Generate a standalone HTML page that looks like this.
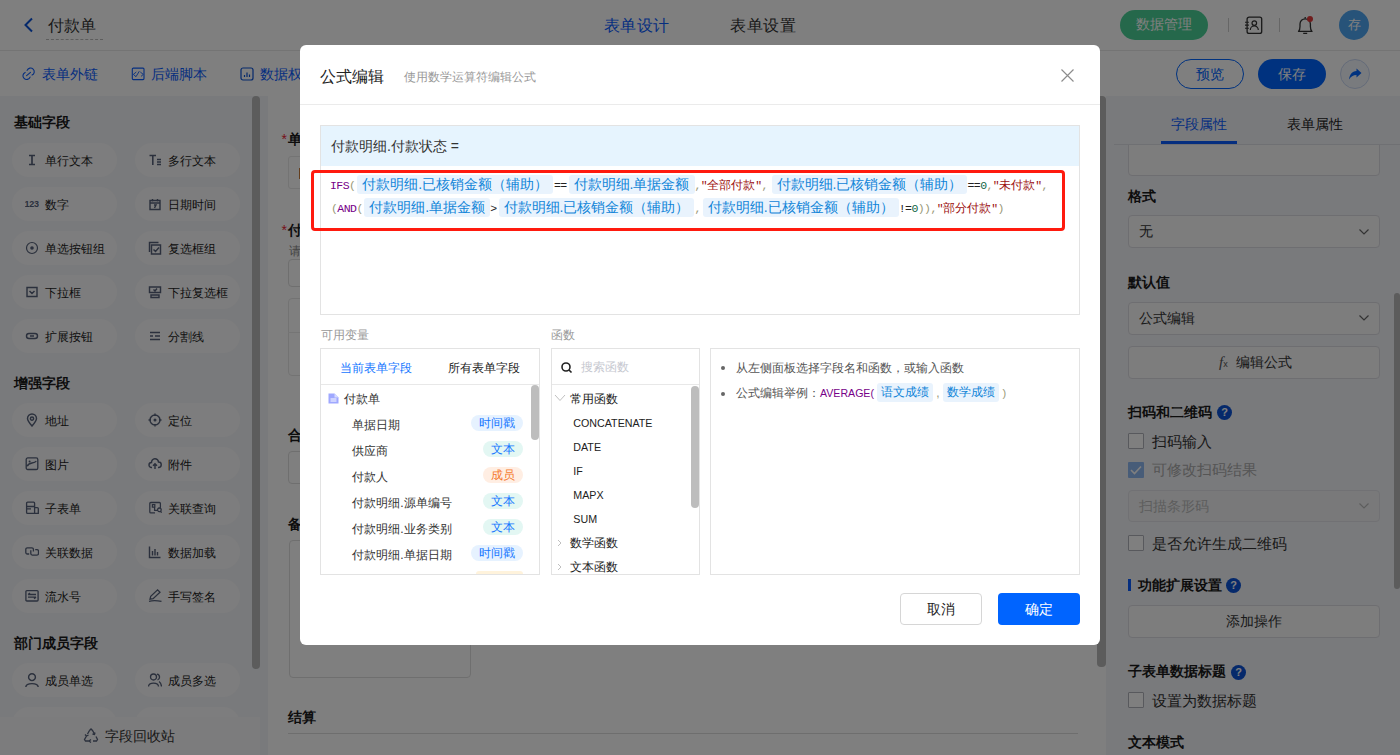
<!DOCTYPE html>
<html><head><meta charset="utf-8"><style>
*{box-sizing:border-box;margin:0;padding:0}
html,body{width:1400px;height:755px;overflow:hidden;background:#fff;font-family:"Liberation Sans",sans-serif;color:#222}
.a{position:absolute}
.nw{white-space:nowrap}
.chip{display:inline-block;height:19.5px;line-height:19.5px;background:#e9f3fd;color:#0f84d8;border-radius:3px;padding:0 5px;font-size:14px;vertical-align:top;margin-top:0.5px}
.chip2{display:inline-block;height:19px;line-height:19px;background:#e9f3fd;color:#0f84d8;border-radius:3px;padding:0 4px;font-size:12px;vertical-align:top;margin-top:0.5px}
.mono{font-family:"Liberation Mono",monospace;font-size:11.5px;letter-spacing:-0.55px}
</style></head><body>
<div class="a" style="left:0px;top:0px;width:1400px;height:50px;background:#fff"></div>
<div class="a" style="left:0px;top:50px;width:1400px;height:1px;background:#e8e8e8"></div>
<svg class="a" style="left:22px;top:17px" width="12" height="16" viewBox="0 0 12 16"><path d="M10 1.5 L3.5 8 L10 14.5" fill="none" stroke="#0a52d6" stroke-width="2"/></svg>
<div class="a nw" style="left:48px;top:14.5px;font-size:16px;line-height:22px;color:#333;font-weight:normal;">付款单</div>
<div class="a" style="left:46px;top:39px;width:57px;height:1px;border-top:1px dashed #bbb"></div>
<div class="a nw" style="left:603.5px;top:14.8px;font-size:16px;line-height:22px;color:#0a5cff;font-weight:normal;letter-spacing:0.6px">表单设计</div>
<div class="a nw" style="left:730px;top:14.8px;font-size:16px;line-height:22px;color:#333;font-weight:normal;letter-spacing:0.6px">表单设置</div>
<div class="a nw" style="left:1120px;top:10px;width:88px;height:30px;border-radius:15px;background:#4ad197;color:#fff;font-size:14px;line-height:29px;text-align:center">数据管理</div>
<div class="a" style="left:1228px;top:18px;width:1px;height:14px;background:#ccc"></div>
<div class="a" style="left:1279px;top:18px;width:1px;height:14px;background:#ccc"></div>
<svg class="a" style="left:1244px;top:16px" width="20" height="19" viewBox="0 0 20 19"><rect x="3.1" y="1.1" width="14.6" height="16.3" rx="2" fill="none" stroke="#333" stroke-width="1.3"/><circle cx="10.3" cy="7.1" r="2.3" fill="none" stroke="#333" stroke-width="1.2"/><path d="M6.3 13.9 A4 4 0 0 1 14.3 13.9" fill="none" stroke="#333" stroke-width="1.2"/><path d="M1 6.3H4.9M1 9.1H4.9M1 12.3H4.9" stroke="#333" stroke-width="1.1"/></svg>
<svg class="a" style="left:1296px;top:15px" width="20" height="21" viewBox="0 0 20 21"><path d="M2.5 16.4H16C14.6 15.2 14.4 13.5 14.4 11.5V9A5.2 5.2 0 0 0 4 9V11.5C4 13.5 3.8 15.2 2.5 16.4Z" fill="none" stroke="#333" stroke-width="1.3" stroke-linejoin="round"/><path d="M7.2 18.4H11.2M9.2 2V3.6" stroke="#333" stroke-width="1.3"/><circle cx="14" cy="3.9" r="3" fill="#e03a3a"/></svg>
<div class="a nw" style="left:1339px;top:10px;width:30px;height:30px;border-radius:15px;background:#4ea6f2;color:#fff;font-size:13px;line-height:30px;text-align:center">存</div>
<div class="a" style="left:0px;top:51px;width:1400px;height:45px;background:#fff"></div>
<svg class="a" style="left:22px;top:67px" width="14" height="14" viewBox="0 0 14 14"><path d="M5.1 3.4A3.7 3.7 0 1 1 10.05 8.1M8.1 10.1A3.7 3.7 0 1 1 3.15 5.4M4.6 8.6L8.5 5.3" fill="none" stroke="#0a5cff" stroke-width="1.1" stroke-linecap="round"/></svg>
<div class="a nw" style="left:42px;top:63.5px;font-size:14px;line-height:20px;color:#0a5cff;font-weight:normal;">表单外链</div>
<svg class="a" style="left:131px;top:67px" width="14" height="14" viewBox="0 0 14 14"><rect x="1.3" y="1.1" width="11.7" height="11.5" rx="1" fill="none" stroke="#0a5cff" stroke-width="1.1"/><path d="M5.3 5L2.3 7.4L5 9.7L8.3 4.2M9.3 5L12.3 7.4L10 9.4" fill="none" stroke="#0a5cff" stroke-width="0.9"/></svg>
<div class="a nw" style="left:151px;top:63.5px;font-size:14px;line-height:20px;color:#0a5cff;font-weight:normal;">后端脚本</div>
<svg class="a" style="left:240px;top:67px" width="14" height="14" viewBox="0 0 14 14"><rect x="1" y="1" width="12" height="12" rx="2" fill="none" stroke="#0a52d6" stroke-width="1.2"/><path d="M4.5 10 V8 M7 10 V5.5 M9.5 10 V7.5" stroke="#0a52d6" stroke-width="1.2"/></svg>
<div class="a nw" style="left:260px;top:63.5px;font-size:14px;line-height:20px;color:#0a5cff;font-weight:normal;">数据权限</div>
<div class="a nw" style="left:1176px;top:59px;width:68px;height:30px;border:1px solid #0064ff;border-radius:15px;color:#0064ff;font-size:14px;line-height:28px;text-align:center">预览</div>
<div class="a nw" style="left:1258px;top:59px;width:68px;height:30px;border-radius:15px;background:#0064ff;color:#fff;font-size:14px;line-height:30px;text-align:center">保存</div>
<div class="a" style="left:1340px;top:59px;width:30px;height:30px;border:1px solid #c9d7f2;border-radius:15px;background:#f3f6fd"></div>
<svg class="a" style="left:1347px;top:66px" width="16" height="16" viewBox="0 0 16 16"><path d="M9.5 2.5 L14.5 7 L9.5 11.5 V9 C6 9 4 10.5 2 13.5 C2.5 8.5 5 5.5 9.5 5 Z" fill="#0064ff"/></svg>
<div class="a" style="left:0px;top:96px;width:268px;height:659px;background:#f3f4f8"></div>
<div class="a" style="left:252px;top:96px;width:8px;height:573px;background:#b8b8b8;border-radius:4px"></div>
<div class="a nw" style="left:14px;top:112.2px;font-size:14px;line-height:20px;color:#1a1a1a;font-weight:bold;">基础字段</div>
<div class="a" style="left:12px;top:143px;width:105px;height:34px;border-radius:17px;background:#fbfbfc"></div>
<svg class="a" style="left:25px;top:153px" width="14" height="14" viewBox="0 0 14 14"><path d="M4 2.5H10M4 11.5H10M7 2.5V11.5" fill="none" stroke="#56617a" stroke-width="1.68"/></svg>
<div class="a nw" style="left:45px;top:150.5px;font-size:12px;line-height:20px;color:#222;font-weight:normal;">单行文本</div>
<div class="a" style="left:135px;top:143px;width:105px;height:34px;border-radius:17px;background:#fbfbfc"></div>
<svg class="a" style="left:148px;top:153px" width="14" height="14" viewBox="0 0 14 14"><path d="M1.5 2.5H8M4.8 2.5V12M9 6.5H13M9 9H13M9 11.5H13" fill="none" stroke="#56617a" stroke-width="1.56"/></svg>
<div class="a nw" style="left:168px;top:150.5px;font-size:12px;line-height:20px;color:#222;font-weight:normal;">多行文本</div>
<div class="a" style="left:12px;top:187px;width:105px;height:34px;border-radius:17px;background:#fbfbfc"></div>
<svg class="a" style="left:25px;top:197px" width="14" height="14" viewBox="0 0 14 14"><text x="-0.5" y="10" font-size="9" font-weight="bold" fill="#56617a" font-family="Liberation Sans" letter-spacing="-0.2">123</text></svg>
<div class="a nw" style="left:45px;top:194.5px;font-size:12px;line-height:20px;color:#222;font-weight:normal;">数字</div>
<div class="a" style="left:135px;top:187px;width:105px;height:34px;border-radius:17px;background:#fbfbfc"></div>
<svg class="a" style="left:148px;top:197px" width="14" height="14" viewBox="0 0 14 14"><path d="M2 3.5H12V12.5H2ZM2 6H12M4.5 2V4.5M9.5 2V4.5M6 8H8L6.5 11" fill="none" stroke="#56617a" stroke-width="1.44"/></svg>
<div class="a nw" style="left:168px;top:194.5px;font-size:12px;line-height:20px;color:#222;font-weight:normal;">日期时间</div>
<div class="a" style="left:12px;top:231px;width:105px;height:34px;border-radius:17px;background:#fbfbfc"></div>
<svg class="a" style="left:25px;top:241px" width="14" height="14" viewBox="0 0 14 14"><circle cx="7" cy="7" r="5.5" fill="none" stroke="#56617a" stroke-width="1.2"/><circle cx="7" cy="7" r="1.8" fill="#56617a"/></svg>
<div class="a nw" style="left:45px;top:238.5px;font-size:12px;line-height:20px;color:#222;font-weight:normal;">单选按钮组</div>
<div class="a" style="left:135px;top:231px;width:105px;height:34px;border-radius:17px;background:#fbfbfc"></div>
<svg class="a" style="left:148px;top:241px" width="14" height="14" viewBox="0 0 14 14"><path d="M3.5 4H12.5V13H3.5ZM1.5 11V1.5H10.5M5.5 8.5L7.5 10.5L11 6.5" fill="none" stroke="#56617a" stroke-width="1.44"/></svg>
<div class="a nw" style="left:168px;top:238.5px;font-size:12px;line-height:20px;color:#222;font-weight:normal;">复选框组</div>
<div class="a" style="left:12px;top:275px;width:105px;height:34px;border-radius:17px;background:#fbfbfc"></div>
<svg class="a" style="left:25px;top:285px" width="14" height="14" viewBox="0 0 14 14"><path d="M2 2.5H12V11.5H2ZM4.5 6L7 8.5L9.5 6" fill="none" stroke="#56617a" stroke-width="1.44"/></svg>
<div class="a nw" style="left:45px;top:282.5px;font-size:12px;line-height:20px;color:#222;font-weight:normal;">下拉框</div>
<div class="a" style="left:135px;top:275px;width:105px;height:34px;border-radius:17px;background:#fbfbfc"></div>
<svg class="a" style="left:148px;top:285px" width="14" height="14" viewBox="0 0 14 14"><path d="M1.5 2H12.5V7.5H1.5ZM3 10H11V12.5H3ZM5.5 4.5L7 6L9 3.5" fill="none" stroke="#56617a" stroke-width="1.44"/></svg>
<div class="a nw" style="left:168px;top:282.5px;font-size:12px;line-height:20px;color:#222;font-weight:normal;">下拉复选框</div>
<div class="a" style="left:12px;top:319px;width:105px;height:34px;border-radius:17px;background:#fbfbfc"></div>
<svg class="a" style="left:25px;top:329px" width="14" height="14" viewBox="0 0 14 14"><path d="M4 4.5H10A2.5 2.5 0 0 1 10 9.5H4A2.5 2.5 0 0 1 4 4.5ZM5 7H9" fill="none" stroke="#56617a" stroke-width="1.44"/></svg>
<div class="a nw" style="left:45px;top:326.5px;font-size:12px;line-height:20px;color:#222;font-weight:normal;">扩展按钮</div>
<div class="a" style="left:135px;top:319px;width:105px;height:34px;border-radius:17px;background:#fbfbfc"></div>
<svg class="a" style="left:148px;top:329px" width="14" height="14" viewBox="0 0 14 14"><path d="M2 3.5H12M2 7H5M7 7H12M2 10.5H12" fill="none" stroke="#56617a" stroke-width="1.44"/></svg>
<div class="a nw" style="left:168px;top:326.5px;font-size:12px;line-height:20px;color:#222;font-weight:normal;">分割线</div>
<div class="a nw" style="left:14px;top:372.5px;font-size:14px;line-height:20px;color:#1a1a1a;font-weight:bold;">增强字段</div>
<div class="a" style="left:12px;top:403px;width:105px;height:34px;border-radius:17px;background:#fbfbfc"></div>
<svg class="a" style="left:25px;top:413px" width="14" height="14" viewBox="0 0 14 14"><path d="M7 13C3.5 9 2.5 7 2.5 5.5A4.5 4.5 0 0 1 11.5 5.5C11.5 7 10.5 9 7 13ZM7 4A1.6 1.6 0 1 1 7 7.2A1.6 1.6 0 1 1 7 4" fill="none" stroke="#56617a" stroke-width="1.44"/></svg>
<div class="a nw" style="left:45px;top:410.5px;font-size:12px;line-height:20px;color:#222;font-weight:normal;">地址</div>
<div class="a" style="left:135px;top:403px;width:105px;height:34px;border-radius:17px;background:#fbfbfc"></div>
<svg class="a" style="left:148px;top:413px" width="14" height="14" viewBox="0 0 14 14"><path d="M7 2A5 5 0 1 1 7 12A5 5 0 1 1 7 2M7 0.5V3M7 11V13.5M0.5 7H3M11 7H13.5" fill="none" stroke="#56617a" stroke-width="1.44"/><circle cx="7" cy="7" r="1.5" fill="#56617a"/></svg>
<div class="a nw" style="left:168px;top:410.5px;font-size:12px;line-height:20px;color:#222;font-weight:normal;">定位</div>
<div class="a" style="left:12px;top:447px;width:105px;height:34px;border-radius:17px;background:#fbfbfc"></div>
<svg class="a" style="left:25px;top:457px" width="14" height="14" viewBox="0 0 14 14"><path d="M2.8 0.9H11.2A1.6 1.6 0 0 1 12.8 2.5V10.9A1.6 1.6 0 0 1 11.2 12.5H2.8A1.6 1.6 0 0 1 1.2 10.9V2.5A1.6 1.6 0 0 1 2.8 0.9ZM2.3 9.3C3 7 5 6.3 7 6C9 5.7 10.5 5.2 11.3 4.2" fill="none" stroke="#56617a" stroke-width="1.32"/><circle cx="4.6" cy="4.4" r="1" fill="#56617a"/></svg>
<div class="a nw" style="left:45px;top:454.5px;font-size:12px;line-height:20px;color:#222;font-weight:normal;">图片</div>
<div class="a" style="left:135px;top:447px;width:105px;height:34px;border-radius:17px;background:#fbfbfc"></div>
<svg class="a" style="left:148px;top:457px" width="14" height="14" viewBox="0 0 14 14"><path d="M4 10.5H3.5A2.5 2.5 0 0 1 3.5 5.5A3.5 3.5 0 0 1 10.5 5A2.5 2.5 0 0 1 10.5 10.5H10M7 12V7M5 8.8L7 6.8L9 8.8" fill="none" stroke="#56617a" stroke-width="1.44"/></svg>
<div class="a nw" style="left:168px;top:454.5px;font-size:12px;line-height:20px;color:#222;font-weight:normal;">附件</div>
<div class="a" style="left:12px;top:491px;width:105px;height:34px;border-radius:17px;background:#fbfbfc"></div>
<svg class="a" style="left:25px;top:501px" width="14" height="14" viewBox="0 0 14 14"><path d="M2.6 1.2H8.6A1 1 0 0 1 9.6 2.2V12.4H2.6A1 1 0 0 1 1.6 11.4V2.2A1 1 0 0 1 2.6 1.2ZM1.6 5.5H9.6M1.8 7.9H6M9.6 6.6H12.3A1 1 0 0 1 13.3 7.6V12.4H9.6" fill="none" stroke="#56617a" stroke-width="1.32"/></svg>
<div class="a nw" style="left:45px;top:498.5px;font-size:12px;line-height:20px;color:#222;font-weight:normal;">子表单</div>
<div class="a" style="left:135px;top:491px;width:105px;height:34px;border-radius:17px;background:#fbfbfc"></div>
<svg class="a" style="left:148px;top:501px" width="14" height="14" viewBox="0 0 14 14"><path d="M7 11.9H2.8A1 1 0 0 1 1.8 10.9V2.5A1 1 0 0 1 2.8 1.5H11.4A1 1 0 0 1 12.4 2.5V6.5M4.4 3.7H6.8V6.1H4.4ZM6.6 6.3V9.3H9.2M11.4 7A1.8 1.8 0 1 1 11.39 7M12.7 10.1L13.6 11.8" fill="none" stroke="#56617a" stroke-width="1.26"/></svg>
<div class="a nw" style="left:168px;top:498.5px;font-size:12px;line-height:20px;color:#222;font-weight:normal;">关联查询</div>
<div class="a" style="left:12px;top:535px;width:105px;height:34px;border-radius:17px;background:#fbfbfc"></div>
<svg class="a" style="left:25px;top:545px" width="14" height="14" viewBox="0 0 14 14"><path d="M4.2 9H2.3A1.5 1.5 0 0 1 0.8 7.5V4.3A1.5 1.5 0 0 1 2.3 2.8H6.9A1.5 1.5 0 0 1 8.4 4.3V6.6M5.8 5.2V8.6A1.5 1.5 0 0 0 7.3 10.1H12A1.5 1.5 0 0 0 13.5 8.6V6.2A1.5 1.5 0 0 0 12 4.7H10.2" fill="none" stroke="#56617a" stroke-width="1.32"/></svg>
<div class="a nw" style="left:45px;top:542.5px;font-size:12px;line-height:20px;color:#222;font-weight:normal;">关联数据</div>
<div class="a" style="left:135px;top:535px;width:105px;height:34px;border-radius:17px;background:#fbfbfc"></div>
<svg class="a" style="left:148px;top:545px" width="14" height="14" viewBox="0 0 14 14"><path d="M1.5 1.5V12.5H12.5M4.5 10.5V6M7 10.5V4M9.5 10.5V7" fill="none" stroke="#56617a" stroke-width="1.44"/></svg>
<div class="a nw" style="left:168px;top:542.5px;font-size:12px;line-height:20px;color:#222;font-weight:normal;">数据加载</div>
<div class="a" style="left:12px;top:579px;width:105px;height:34px;border-radius:17px;background:#fbfbfc"></div>
<svg class="a" style="left:25px;top:589px" width="14" height="14" viewBox="0 0 14 14"><path d="M1.9 1.6H12.1A1 1 0 0 1 13.1 2.6V11A1 1 0 0 1 12.1 12H1.9A1 1 0 0 1 0.9 11V2.6A1 1 0 0 1 1.9 1.6ZM3 5.5H11M3 5.5L5 4M3 8.1H11M11 8.1L9 9.6" fill="none" stroke="#56617a" stroke-width="1.32"/></svg>
<div class="a nw" style="left:45px;top:586.5px;font-size:12px;line-height:20px;color:#222;font-weight:normal;">流水号</div>
<div class="a" style="left:135px;top:579px;width:105px;height:34px;border-radius:17px;background:#fbfbfc"></div>
<svg class="a" style="left:148px;top:589px" width="14" height="14" viewBox="0 0 14 14"><path d="M2 10.2L2.7 7.4L9.6 0.9L12 3.2L5.1 9.6ZM1 12.4C4 11.5 8 11.3 13.5 12.4" fill="none" stroke="#56617a" stroke-width="1.26"/></svg>
<div class="a nw" style="left:168px;top:586.5px;font-size:12px;line-height:20px;color:#222;font-weight:normal;">手写签名</div>
<div class="a nw" style="left:14px;top:632.5px;font-size:14px;line-height:20px;color:#1a1a1a;font-weight:bold;">部门成员字段</div>
<div class="a" style="left:12px;top:663px;width:105px;height:34px;border-radius:17px;background:#fbfbfc"></div>
<svg class="a" style="left:25px;top:673px" width="14" height="14" viewBox="0 0 14 14"><path d="M7 0.8A3.4 3.4 0 1 1 7 7.6A3.4 3.4 0 1 1 7 0.8M0.8 14C1.2 9.5 12.8 9.5 13.2 14" fill="none" stroke="#56617a" stroke-width="1.44"/></svg>
<div class="a nw" style="left:45px;top:670.5px;font-size:12px;line-height:20px;color:#222;font-weight:normal;">成员单选</div>
<div class="a" style="left:135px;top:663px;width:105px;height:34px;border-radius:17px;background:#fbfbfc"></div>
<svg class="a" style="left:148px;top:673px" width="14" height="14" viewBox="0 0 14 14"><path d="M5.5 1A3 3 0 1 1 5.5 7A3 3 0 1 1 5.5 1M0.5 13.5C0.8 9 10.2 9 10.5 13.5M9 1.2A3 3 0 0 1 9.5 7M11 8.5C12.8 9.5 13.3 11.5 13.5 13.5" fill="none" stroke="#56617a" stroke-width="1.32"/></svg>
<div class="a nw" style="left:168px;top:670.5px;font-size:12px;line-height:20px;color:#222;font-weight:normal;">成员多选</div>
<div class="a" style="left:12px;top:707px;width:105px;height:34px;border-radius:17px;background:#fbfbfc"></div>
<svg class="a" style="left:25px;top:717px" width="14" height="14" viewBox="0 0 14 14"><path d="M2 2H12V12H2Z" fill="none" stroke="#56617a" stroke-width="1.44"/></svg>
<div class="a nw" style="left:45px;top:714.5px;font-size:12px;line-height:20px;color:#222;font-weight:normal;">部门单选</div>
<div class="a" style="left:135px;top:707px;width:105px;height:34px;border-radius:17px;background:#fbfbfc"></div>
<svg class="a" style="left:148px;top:717px" width="14" height="14" viewBox="0 0 14 14"><path d="M2 2H12V12H2Z" fill="none" stroke="#56617a" stroke-width="1.44"/></svg>
<div class="a nw" style="left:168px;top:714.5px;font-size:12px;line-height:20px;color:#222;font-weight:normal;">部门多选</div>
<div class="a" style="left:0px;top:716.5px;width:260px;height:39px;background:#f9f9fa"></div>
<svg class="a" style="left:83px;top:728px" width="16" height="15" viewBox="0 0 16 15"><path d="M6.5 2.5L8 1L9.5 2.5L11.5 6M13 8.5L14.5 11.5L13.5 13H10M6 13H2.5L1.5 11.5L3.5 8M4.5 6L6.5 2.5M12 4.5L11.5 6.5L9.5 6M8 14.5L6 13L8 11.5M2 6.5L3.5 8L5.5 7" fill="none" stroke="#56617a" stroke-width="1.32"/></svg>
<div class="a nw" style="left:105px;top:725.8px;font-size:14px;line-height:20px;color:#333;font-weight:normal;">字段回收站</div>
<div class="a" style="left:268px;top:96px;width:838px;height:659px;background:#fff"></div>
<div class="a" style="left:1097px;top:96px;width:9px;height:571px;background:#b8b8b8;border-radius:4px"></div>
<div class="a nw" style="left:281.5px;top:129.0px;font-size:14px;line-height:20px;color:#e23;font-weight:normal;">*</div>
<div class="a nw" style="left:288px;top:129.0px;font-size:14px;line-height:20px;color:#1a1a1a;font-weight:bold;">单据日期</div>
<div class="a" style="left:288px;top:156px;width:400px;height:33px;border:1px solid #e8e8e8;border-radius:3px"></div>
<div class="a" style="left:299px;top:168px;width:1px;height:11px;background:#c97c3a"></div>
<div class="a nw" style="left:281.5px;top:219.5px;font-size:14px;line-height:20px;color:#e23;font-weight:normal;">*</div>
<div class="a nw" style="left:288px;top:219.5px;font-size:14px;line-height:20px;color:#1a1a1a;font-weight:bold;">付款明细</div>
<div class="a nw" style="left:288.5px;top:241.0px;font-size:12px;line-height:20px;color:#888;font-weight:normal;">请填写明细</div>
<div class="a" style="left:288px;top:259px;width:400px;height:28px;border:1px solid #dedede;border-radius:4px"></div>
<div class="a" style="left:288px;top:298px;width:800px;height:78px;border:1px solid #e6e6e6;border-radius:4px"></div>
<div class="a" style="left:288px;top:332px;width:800px;height:1px;background:#eaeaea"></div>
<div class="a nw" style="left:288px;top:425.0px;font-size:14px;line-height:20px;color:#1a1a1a;font-weight:bold;">合计金额</div>
<div class="a" style="left:288px;top:451px;width:400px;height:33px;border:1px solid #dedede;border-radius:4px"></div>
<div class="a nw" style="left:288px;top:513.5px;font-size:14px;line-height:20px;color:#1a1a1a;font-weight:bold;">备注</div>
<div class="a" style="left:289px;top:540px;width:182px;height:138px;border:1px solid #dedede;border-radius:4px"></div>
<div class="a nw" style="left:288px;top:706.5px;font-size:14px;line-height:20px;color:#1a1a1a;font-weight:bold;">结算</div>
<div class="a" style="left:288px;top:733px;width:790px;height:1px;background:#dcdcdc"></div>
<div class="a" style="left:1106px;top:96px;width:294px;height:659px;background:#f3f4f8"></div>
<div class="a" style="left:1394px;top:293px;width:6px;height:296px;background:#b8b8b8;border-radius:3px"></div>
<div class="a" style="left:1128px;top:130px;width:252px;height:46px;background:#fafafb;border:1px solid #dcdde3;border-radius:4px"></div>
<div class="a" style="left:1106px;top:96px;width:288px;height:48px;background:#f3f4f8"></div>
<div class="a" style="left:1114px;top:144px;width:286px;height:1px;background:#dfe1e6"></div>
<div class="a nw" style="left:1171px;top:113.5px;font-size:14px;line-height:20px;color:#0a5cff;font-weight:normal;">字段属性</div>
<div class="a nw" style="left:1287px;top:113.5px;font-size:14px;line-height:20px;color:#222;font-weight:normal;">表单属性</div>
<div class="a" style="left:1161px;top:141px;width:76px;height:3px;background:#0a5cff"></div>
<div class="a nw" style="left:1128px;top:185.5px;font-size:14px;line-height:20px;color:#1a1a1a;font-weight:bold;">格式</div>
<div class="a" style="left:1128px;top:215px;width:252px;height:33px;background:#fafafb;border:1px solid #dcdde3;border-radius:4px"></div>
<div class="a nw" style="left:1139px;top:221.0px;font-size:14px;line-height:20px;color:#333;font-weight:normal;">无</div>
<svg class="a" style="left:1358px;top:227.5px" width="12" height="8" viewBox="0 0 12 8"><path d="M1.5 1.5L6 6L10.5 1.5" fill="none" stroke="#666" stroke-width="1.2"/></svg>
<div class="a nw" style="left:1128px;top:271.5px;font-size:14px;line-height:20px;color:#1a1a1a;font-weight:bold;">默认值</div>
<div class="a" style="left:1128px;top:301.5px;width:252px;height:33px;background:#fafafb;border:1px solid #dcdde3;border-radius:4px"></div>
<div class="a nw" style="left:1139px;top:307.5px;font-size:14px;line-height:20px;color:#333;font-weight:normal;">公式编辑</div>
<svg class="a" style="left:1358px;top:314px" width="12" height="8" viewBox="0 0 12 8"><path d="M1.5 1.5L6 6L10.5 1.5" fill="none" stroke="#666" stroke-width="1.2"/></svg>
<div class="a" style="left:1128px;top:345.5px;width:252px;height:33px;background:#fafafb;border:1px solid #dcdde3;border-radius:4px"></div>
<div class="a nw" style="left:1219px;top:351.5px;font-size:14px;line-height:20px;color:#555;font-weight:normal;"><i style='font-family:Liberation Serif;font-size:15px'>f</i><span style='font-size:9px'>x</span></div>
<div class="a nw" style="left:1236px;top:351.5px;font-size:14px;line-height:20px;color:#333;font-weight:normal;">编辑公式</div>
<div class="a nw" style="left:1128px;top:401.5px;font-size:14px;line-height:20px;color:#1a1a1a;font-weight:bold;">扫码和二维码</div>
<div class="a" style="left:1217px;top:404.5px;width:15px;height:15px;border-radius:50%;background:#0a52d6;color:#fff;font-size:11px;font-weight:bold;line-height:15px;text-align:center">?</div>
<div class="a" style="left:1128px;top:433.3px;width:16px;height:16px;border-radius:1px;background:#fff;border:1px solid #b0b3bb"></div>
<div class="a nw" style="left:1152px;top:431.8px;font-size:14.6px;line-height:20px;color:#333;font-weight:normal;">扫码输入</div>
<div class="a" style="left:1128px;top:461.8px;width:16px;height:16px;border-radius:1px;background:#8fb8f0"></div>
<svg class="a" style="left:1128px;top:461.8px" width="16" height="16" viewBox="0 0 16 16"><path d="M3 8L6.5 11.5L13 4.5" fill="none" stroke="#fff" stroke-width="1.6"/></svg>
<div class="a nw" style="left:1152px;top:460.3px;font-size:14.6px;line-height:20px;color:#aaa;font-weight:normal;">可修改扫码结果</div>
<div class="a" style="left:1128px;top:490px;width:252px;height:32px;background:#f2f3f5;border:1px solid #e2e3e8;border-radius:4px"></div>
<div class="a nw" style="left:1139px;top:495.5px;font-size:14px;line-height:20px;color:#bbb;font-weight:normal;">扫描条形码</div>
<svg class="a" style="left:1358px;top:502px" width="12" height="8" viewBox="0 0 12 8"><path d="M1.5 1.5L6 6L10.5 1.5" fill="none" stroke="#bbb" stroke-width="1.2"/></svg>
<div class="a" style="left:1128px;top:535.3px;width:16px;height:16px;border-radius:1px;background:#fff;border:1px solid #b0b3bb"></div>
<div class="a nw" style="left:1152px;top:533.8px;font-size:14.6px;line-height:20px;color:#333;font-weight:normal;">是否允许生成二维码</div>
<div class="a" style="left:1128px;top:579px;width:3px;height:12px;background:#0a5cff"></div>
<div class="a nw" style="left:1137.5px;top:574.5px;font-size:14px;line-height:20px;color:#1a1a1a;font-weight:bold;">功能扩展设置</div>
<div class="a" style="left:1226px;top:577.5px;width:15px;height:15px;border-radius:50%;background:#0a52d6;color:#fff;font-size:11px;font-weight:bold;line-height:15px;text-align:center">?</div>
<div class="a" style="left:1128px;top:604.5px;width:252px;height:33px;background:#fafafb;border:1px solid #dcdde3;border-radius:4px"></div>
<div class="a nw" style="left:1226px;top:610.5px;font-size:14px;line-height:20px;color:#333;font-weight:normal;">添加操作</div>
<div class="a nw" style="left:1128px;top:661.0px;font-size:14px;line-height:20px;color:#1a1a1a;font-weight:bold;">子表单数据标题</div>
<div class="a" style="left:1231px;top:664.5px;width:15px;height:15px;border-radius:50%;background:#0a52d6;color:#fff;font-size:11px;font-weight:bold;line-height:15px;text-align:center">?</div>
<div class="a" style="left:1128px;top:692px;width:16px;height:16px;border-radius:1px;background:#fff;border:1px solid #b0b3bb"></div>
<div class="a nw" style="left:1152px;top:690.5px;font-size:14.6px;line-height:20px;color:#333;font-weight:normal;">设置为数据标题</div>
<div class="a nw" style="left:1128px;top:731.5px;font-size:14px;line-height:20px;color:#1a1a1a;font-weight:bold;">文本模式</div>
<div class="a" style="left:0px;top:0px;width:1400px;height:755px;background:rgba(0,0,0,.5)"></div>
<div class="a" style="left:300px;top:45px;width:800px;height:600px;background:#fff;border-radius:6px"></div>
<div class="a nw" style="left:320px;top:65.5px;font-size:16px;line-height:22px;color:#222;font-weight:normal;">公式编辑</div>
<div class="a nw" style="left:404px;top:67.0px;font-size:12px;line-height:20px;color:#999;font-weight:normal;">使用数学运算符编辑公式</div>
<svg class="a" style="left:1060px;top:68px" width="15" height="15" viewBox="0 0 15 15"><path d="M1.5 1.5L13.5 13.5M13.5 1.5L1.5 13.5" stroke="#8c8c8c" stroke-width="1.15"/></svg>
<div class="a" style="left:300px;top:104px;width:800px;height:1px;background:#ebebeb"></div>
<div class="a" style="left:320px;top:125px;width:760px;height:190px;border:1px solid #e3e3e3"></div>
<div class="a" style="left:321px;top:126px;width:758px;height:40px;background:#e6f4fe"></div>
<div class="a nw" style="left:331px;top:135.5px;font-size:14px;line-height:20px;color:#333;font-weight:normal;">付款明细.付款状态 =</div>
<div class="a nw" style="left:330px;top:174px;height:22px;line-height:22px;font-size:12px"><span class="mono" style="color:#708">IFS</span><span class="mono" style="color:#997">(</span><span style="display:inline-block;width:1.8px"></span><span class="chip">付款明细.已核销金额（辅助）</span><span style="display:inline-block;width:0.8px"></span><span class="mono" style="color:#222">==</span><span style="display:inline-block;width:2px"></span><span class="chip">付款明细.单据金额</span><span class="mono" style="color:#997">,</span><span style="color:#9c1010"><span class="mono">"</span>全部付款<span class="mono">"</span></span><span class="mono" style="color:#997">,</span><span style="display:inline-block;width:3.6px"></span><span class="chip">付款明细.已核销金额（辅助）</span><span class="mono" style="color:#222">==</span><span class="mono" style="color:#164">0</span><span class="mono" style="color:#997">,</span><span style="color:#9c1010"><span class="mono">"</span>未付款<span class="mono">"</span></span><span class="mono" style="color:#997">,</span></div>
<div class="a nw" style="left:331px;top:197px;height:22px;line-height:22px;font-size:12px"><span class="mono" style="color:#997">(</span><span class="mono" style="color:#708">AND</span><span class="mono" style="color:#997">(</span><span style="display:inline-block;width:1.5px"></span><span class="chip">付款明细.单据金额</span><span class="mono" style="color:#222">&gt;</span><span style="display:inline-block;width:2px"></span><span class="chip">付款明细.已核销金额（辅助）</span><span class="mono" style="color:#997">,</span><span style="display:inline-block;width:2px"></span><span class="chip">付款明细.已核销金额（辅助）</span><span class="mono" style="color:#222">!=</span><span class="mono" style="color:#164">0</span><span class="mono" style="color:#997">))</span><span class="mono" style="color:#997">,</span><span style="color:#9c1010"><span class="mono">"</span>部分付款<span class="mono">"</span></span><span class="mono" style="color:#997">)</span></div>
<div class="a" style="left:311px;top:170px;width:754px;height:61px;border:3px solid #ff1a0e;border-radius:4px"></div>
<div class="a nw" style="left:320.5px;top:324.5px;font-size:12px;line-height:20px;color:#999;font-weight:normal;">可用变量</div>
<div class="a nw" style="left:550.5px;top:324.5px;font-size:12px;line-height:20px;color:#999;font-weight:normal;">函数</div>
<div class="a" style="left:320px;top:348px;width:220px;height:227px;border:1px solid #e3e3e3"></div>
<div class="a" style="left:321px;top:384px;width:218px;height:1px;background:#e8e8e8"></div>
<div class="a nw" style="left:340px;top:358.0px;font-size:12px;line-height:20px;color:#1677ff;font-weight:normal;">当前表单字段</div>
<div class="a nw" style="left:448.4px;top:358.0px;font-size:12px;line-height:20px;color:#222;font-weight:normal;">所有表单字段</div>
<svg class="a" style="left:328px;top:393px" width="11" height="11" viewBox="0 0 11 11"><path d="M0.5 0.5H6.5L10.5 4.5V10.5H0.5Z" fill="#9fa8ff"/><path d="M2.5 6H8.5M2.5 8H8.5" stroke="#fff" stroke-width="1"/><path d="M6.5 0.5V4.5H10.5" fill="#d5daff"/></svg>
<div class="a nw" style="left:344.4px;top:389.3px;font-size:12px;line-height:20px;color:#333;font-weight:normal;">付款单</div>
<div class="a nw" style="left:352.2px;top:414.8px;font-size:12px;line-height:20px;color:#333;font-weight:normal;">单据日期</div>
<div class="a nw" style="left:470.70000000000005px;top:415.3px;width:52px;height:16px;border-radius:8px;background:#e6f2ff;color:#1677ff;font-size:12px;line-height:16px;text-align:center">时间戳</div>
<div class="a nw" style="left:352.2px;top:440.8px;font-size:12px;line-height:20px;color:#333;font-weight:normal;">供应商</div>
<div class="a nw" style="left:482.70000000000005px;top:441.3px;width:40px;height:16px;border-radius:8px;background:#e3f7f3;color:#1677ff;font-size:12px;line-height:16px;text-align:center">文本</div>
<div class="a nw" style="left:352.2px;top:466.8px;font-size:12px;line-height:20px;color:#333;font-weight:normal;">付款人</div>
<div class="a nw" style="left:482.70000000000005px;top:467.3px;width:40px;height:16px;border-radius:8px;background:#ffeee3;color:#f57a2e;font-size:12px;line-height:16px;text-align:center">成员</div>
<div class="a nw" style="left:352.2px;top:492.8px;font-size:12px;line-height:20px;color:#333;font-weight:normal;">付款明细.源单编号</div>
<div class="a nw" style="left:482.70000000000005px;top:493.3px;width:40px;height:16px;border-radius:8px;background:#e3f7f3;color:#1677ff;font-size:12px;line-height:16px;text-align:center">文本</div>
<div class="a nw" style="left:352.2px;top:518.8px;font-size:12px;line-height:20px;color:#333;font-weight:normal;">付款明细.业务类别</div>
<div class="a nw" style="left:482.70000000000005px;top:519.3px;width:40px;height:16px;border-radius:8px;background:#e3f7f3;color:#1677ff;font-size:12px;line-height:16px;text-align:center">文本</div>
<div class="a nw" style="left:352.2px;top:544.8px;font-size:12px;line-height:20px;color:#333;font-weight:normal;">付款明细.单据日期</div>
<div class="a nw" style="left:470.70000000000005px;top:545.3px;width:52px;height:16px;border-radius:8px;background:#e6f2ff;color:#1677ff;font-size:12px;line-height:16px;text-align:center">时间戳</div>
<div class="a" style="left:522.7px;top:566px;width:30px;height:8px"></div>
<div class="a" style="left:476px;top:571px;width:47px;height:3px;background:#fff3dc;border-radius:6px 6px 0 0"></div>
<div class="a" style="left:531px;top:385px;width:8px;height:55px;background:#bdbdbd;border-radius:4px"></div>
<div class="a" style="left:551px;top:348px;width:149px;height:227px;border:1px solid #e3e3e3"></div>
<div class="a" style="left:552px;top:384px;width:147px;height:1px;background:#e8e8e8"></div>
<svg class="a" style="left:561px;top:362px" width="12" height="11" viewBox="0 0 12 11"><circle cx="5" cy="5" r="4" fill="none" stroke="#222" stroke-width="1.6"/><path d="M8 8L10.5 10.5" stroke="#222" stroke-width="1.6"/></svg>
<div class="a nw" style="left:581px;top:357.0px;font-size:12px;line-height:20px;color:#c6c8d0;font-weight:normal;">搜索函数</div>
<svg class="a" style="left:554px;top:394px" width="12" height="8" viewBox="0 0 12 8"><path d="M1 1L6 6.5L11 1" fill="none" stroke="#c0c0c0" stroke-width="1"/></svg>
<div class="a nw" style="left:569.5px;top:389.0px;font-size:12px;line-height:20px;color:#222;font-weight:normal;">常用函数</div>
<div class="a nw" style="left:573.3px;top:413.2px;font-size:10.7px;line-height:20px;color:#222;font-weight:normal;">CONCATENATE</div>
<div class="a nw" style="left:573.3px;top:437.2px;font-size:10.7px;line-height:20px;color:#222;font-weight:normal;">DATE</div>
<div class="a nw" style="left:573.3px;top:461.2px;font-size:10.7px;line-height:20px;color:#222;font-weight:normal;">IF</div>
<div class="a nw" style="left:573.3px;top:485.2px;font-size:10.7px;line-height:20px;color:#222;font-weight:normal;">MAPX</div>
<div class="a nw" style="left:573.3px;top:509.20000000000005px;font-size:10.7px;line-height:20px;color:#222;font-weight:normal;">SUM</div>
<svg class="a" style="left:557px;top:538.5px" width="5" height="8" viewBox="0 0 5 8"><path d="M1 1L4 4L1 7" fill="none" stroke="#c0c0c0" stroke-width="1"/></svg>
<div class="a nw" style="left:569.5px;top:533.0px;font-size:12px;line-height:20px;color:#222;font-weight:normal;">数学函数</div>
<svg class="a" style="left:557px;top:562.5px" width="5" height="8" viewBox="0 0 5 8"><path d="M1 1L4 4L1 7" fill="none" stroke="#c0c0c0" stroke-width="1"/></svg>
<div class="a nw" style="left:569.5px;top:557.0px;font-size:12px;line-height:20px;color:#222;font-weight:normal;">文本函数</div>
<div class="a" style="left:691px;top:386px;width:7.5px;height:122px;background:#bdbdbd;border-radius:4px"></div>
<div class="a" style="left:710px;top:348px;width:370px;height:227px;border:1px solid #e3e3e3"></div>
<div class="a" style="left:721px;top:366px;width:4px;height:4px;background:#666;border-radius:2px"></div>
<div class="a nw" style="left:736px;top:357.5px;font-size:12px;line-height:20px;color:#555;font-weight:normal;">从左侧面板选择字段名和函数，或输入函数</div>
<div class="a" style="left:721px;top:391.5px;width:4px;height:4px;background:#666;border-radius:2px"></div>
<div class="a nw" style="left:736px;top:382.6px;height:20px;line-height:20px;font-size:12px;color:#555">公式编辑举例：<span style="color:#708;font-size:10.6px">AVERAGE(</span><span class="chip2" style="margin-left:3px">语文成绩</span><span style="color:#997"> , </span><span class="chip2" style="margin-left:0.5px">数学成绩</span><span style="color:#997;font-size:11px"> )</span></div>
<div class="a nw" style="left:900px;top:593px;width:82px;height:32px;border:1px solid #d6d6d6;border-radius:4px;background:#fff;color:#222;font-size:14px;line-height:30px;text-align:center">取消</div>
<div class="a nw" style="left:998px;top:593px;width:82px;height:32px;border-radius:4px;background:#0064ff;color:#fff;font-size:14px;line-height:32px;text-align:center;font-weight:normal">确定</div>
</body></html>
